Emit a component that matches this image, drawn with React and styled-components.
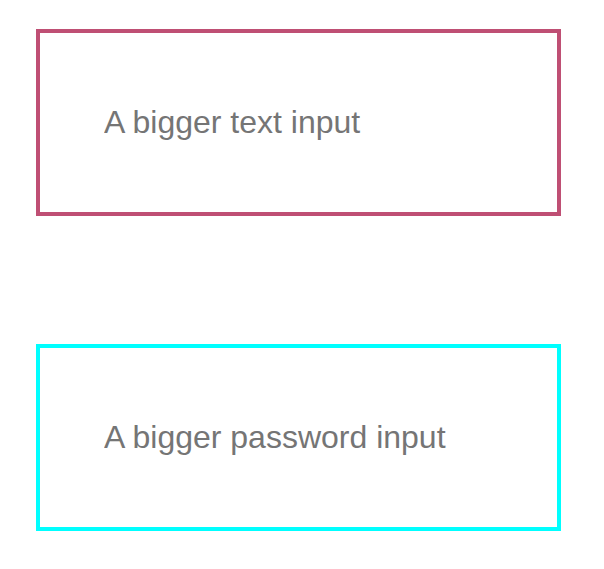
import React from "react";
import styled, { createGlobalStyle } from "styled-components";

const GlobalStyle = createGlobalStyle`
  *, *::before, *::after { box-sizing: border-box; }
  body { margin: 0; background: #ffffff; }
`;

const Form = styled.form`
  display: flex;
  flex-direction: column;
  gap: 128px;
  padding: 29px 43px 38px 36px;
`;

const TextField = styled.input`
  width: 100%;
  padding: 71px 64px;
  border: 4px solid ${({ $color }) => $color};
  border-radius: 0;
  background: #ffffff;
  color: #000000;
  font-family: "Liberation Sans", Arial, sans-serif;
  font-size: 32px;
  line-height: 37px;

  &::placeholder { color: #757575; opacity: 1; }
`;

export default function App() {
  return (
    <>
      <GlobalStyle />
      <Form>
        <TextField
          type="text"
          $color="#bf4f74"
          placeholder="A bigger text input"
          aria-label="A bigger text input"
        />
        <TextField
          type="password"
          $color="#00ffff"
          placeholder="A bigger password input"
          aria-label="A bigger password input"
          autoComplete="off"
        />
      </Form>
    </>
  );
}
